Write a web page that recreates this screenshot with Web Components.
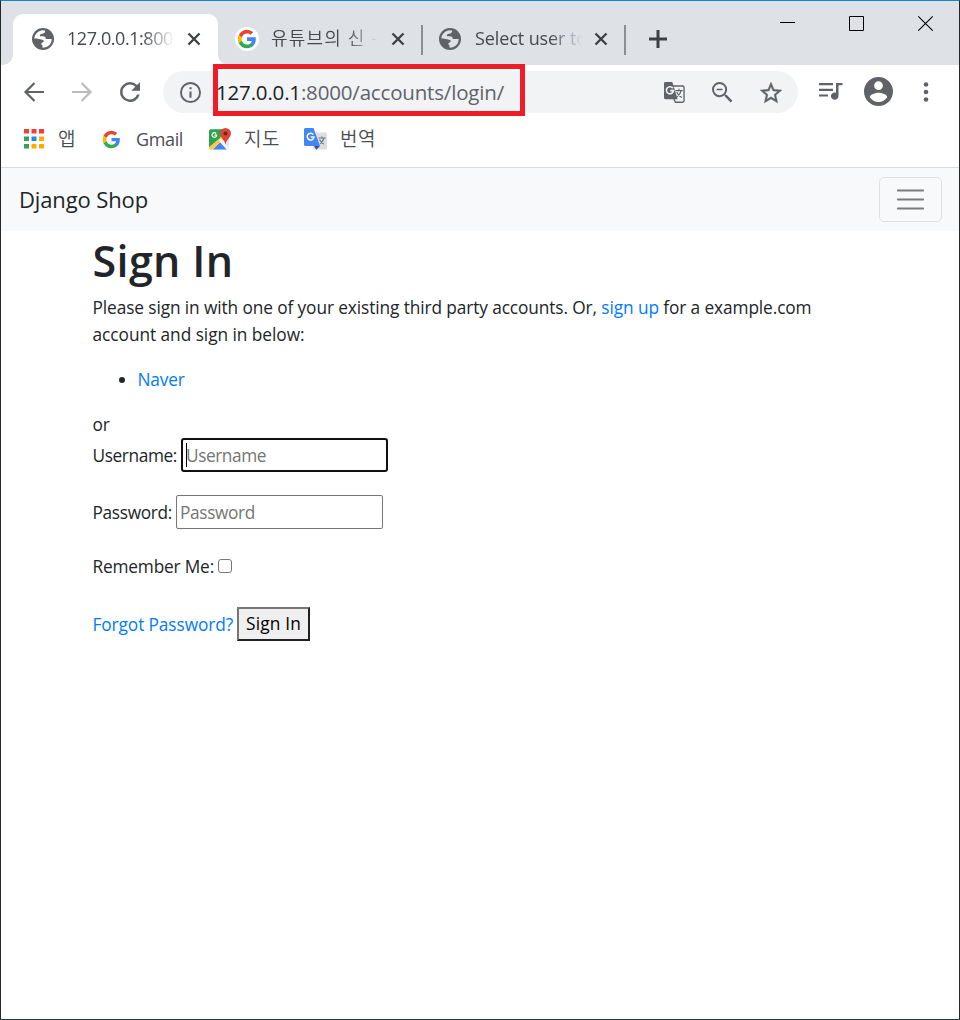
<!DOCTYPE html>
<html lang="ko">
<head>
<meta charset="utf-8">
<title>Django Shop</title>
<style>
html,body{margin:0;height:100%;background:#fff;overflow:hidden}
body{font-family:"Open Sans","Noto Sans CJK KR",sans-serif;color:#212529}
</style>
</head>
<body>
<browser-window></browser-window>
<script>
const define = (name, html, setup) => {
  const t = document.createElement('template');
  t.innerHTML = html;
  customElements.define(name, class extends HTMLElement {
    connectedCallback() {
      if (this.shadowRoot) return;
      this.attachShadow({ mode: 'open' }).appendChild(t.content.cloneNode(true));
      if (setup) setup(this, this.shadowRoot);
    }
  });
};

/* text run tracked to a given advance width */
define('fit-text', `<style>:host{display:inline-block;white-space:pre}</style><slot></slot>`, el => {
  const w = +el.getAttribute('w'), n = el.textContent.length;
  el.style.letterSpacing = ((w - el.getBoundingClientRect().width) / n) + 'px';
});

const GOOGLE = `<path fill="#4285f4" d="M45.1 24.5c0-1.6-.1-3.100-.4-4.500H24v8.500h11.800c-.5 2.800-2.100 5.100-4.400 6.700v5.500h7.100c4.200-3.800 6.600-9.500 6.600-16.200z"/><path fill="#34a853" d="M24 46c5.900 0 10.900-2 14.600-5.300l-7.100-5.500c-2 1.300-4.500 2.100-7.500 2.100-5.700 0-10.600-3.900-12.300-9.100H4.300v5.700C8 41.100 15.400 46 24 46z"/><path fill="#fbbc05" d="M11.700 28.200a13.200 13.200 0 0 1 0-8.400v-5.700H4.300a22 22 0 0 0 0 19.800z"/><path fill="#ea4335" d="M24 10.700c3.200 0 6.100 1.100 8.400 3.300l6.300-6.300A22 22 0 0 0 4.300 14.100l7.400 5.700c1.700-5.200 6.600-9.100 12.300-9.100z"/>`;
const ICONS = {
  globe: ['0 0 24 24', `<circle cx="12" cy="12" r="12" fill="#5f6368"/><path fill="var(--hole,#fff)" d="M2.500 11.500C3 6.500 7 2.800 12 2.500l2.500.4C14.300 5 12.800 6 11 6.300 9.300 6.500 8.300 7.500 8.600 9H12c2.300 0 3 1.200 3 3h6.500c0 5.300-4 9.500-10 9.500V19c-1.800-.8-1.800-2.700 0-3.200 2-.6 1.800-2.400-.5-2.900-3-.7-5.300-1.500-8.500-1.400z"/>`],
  google: ['0 0 48 48', GOOGLE],
  close: ['0 0 14 14', `<path d="M1.500 1.500l11 11m0-11l-11 11" fill="none" stroke="#3c4043" stroke-width="2.300"/>`],
  plus: ['0 0 18 18', `<path d="M9 0v18M0 9h18" stroke="#3c4043" stroke-width="3"/>`],
  back: ['0 0 20 20', `<path d="M20 10H1.500M10.500 1L1.500 10l9 9" fill="none" stroke="#5f6368" stroke-width="2.200"/>`],
  forward: ['0 0 20 20', `<path d="M0 10h18.500M9.500 1l9 9-9 9" fill="none" stroke="#babcbe" stroke-width="2.200"/>`],
  reload: ['4 4 16 16', `<path fill="#5f6368" d="M17.650 6.350A7.958 7.958 0 0 0 12 4a8 8 0 1 0 7.730 10h-2.080A6 6 0 1 1 12 6c1.660 0 3.140.69 4.220 1.780L13 11h7V4z"/>`],
  info: ['2 2 20 20', `<path fill="#5f6368" d="M11 17h2v-6h-2v6zm1-15a10 10 0 1 0 0 20 10 10 0 0 0 0-20zm0 18.200a8.200 8.200 0 1 1 0-16.400 8.200 8.200 0 0 1 0 16.400zM11 9h2V7h-2v2z"/>`],
  translate: ['0 0 22 22', `<path fill="none" stroke="#5f6368" stroke-width="1.400" d="M9 4.200h10.500a1.500 1.500 0 0 1 1.500 1.500v14a1.500 1.500 0 0 1-1.500 1.500H12l-2-4"/><path fill="#5f6368" d="M1.500 0h7.200L14.300 18H1.500A1.500 1.500 0 0 1 0 16.500v-15A1.500 1.500 0 0 1 1.500 0z"/><path d="M9.300 6.600A3.700 3.700 0 1 0 9.900 9H6.400" fill="none" stroke="#f1f3f4" stroke-width="1.700"/><path d="M12 9h7.500M15.700 7v2M18 9c-.6 3-2.500 5-4.700 6.700M13.300 10.500c1 2.500 3.200 4.600 5.500 5.700" fill="none" stroke="#5f6368" stroke-width="1.200"/>`],
  zoomout: ['3 3 18 18', `<path fill="#5f6368" d="M15.500 14h-.79l-.28-.27A6.471 6.471 0 0 0 16 9.500 6.500 6.500 0 1 0 9.500 16c1.610 0 3.090-.59 4.230-1.570l.27.28v.79l5 4.990L20.490 19l-4.990-5zm-6 .3a4.800 4.800 0 1 1 0-9.600 4.800 4.800 0 0 1 0 9.600zM7 8.800h5v1.300H7z"/>`],
  star: ['2 2 20 19', `<path fill="#5f6368" d="M22 9.240l-7.190-.62L12 2 9.190 8.630 2 9.240l5.460 4.730L5.820 21 12 17.270 18.180 21l-1.630-7.030L22 9.240zM12 15.400l-3.760 2.270 1-4.280-3.320-2.880 4.380-.38L12 6.100l1.710 4.040 4.380.38-3.320 2.880 1 4.280L12 15.400z" stroke="#5f6368" stroke-width=".3"/>`],
  music: ['0 0 24 20', `<path d="M0 2.200h14M0 8.200h14M0 14.200h9" stroke="#5f6368" stroke-width="2.300"/><path fill="#5f6368" d="M17 1h6.500v2.500h-4v11.300a3.800 3.800 0 1 1-2.500-3.500z"/>`],
  person: ['2 2 20 20', `<path fill="#5f6368" d="M12 2a10 10 0 1 0 0 20 10 10 0 0 0 0-20zm0 3a3 3 0 1 1 0 6 3 3 0 0 1 0-6zm0 14.200a7.200 7.200 0 0 1-6-3.220c.03-1.990 4-3.080 6-3.080 1.990 0 5.970 1.090 6 3.080a7.200 7.200 0 0 1-6 3.220z"/>`],
  dots: ['0 0 6 20', `<g fill="#5f6368"><circle cx="3" cy="2.500" r="2.300"/><circle cx="3" cy="10" r="2.300"/><circle cx="3" cy="17.500" r="2.300"/></g>`],
  apps: ['0 0 20 20', `<path fill="#ef4036" d="M0 0h5v4.500H0zM7.500 0h5v4.500h-5zM15 0h5v4.500h-5z"/><path fill="#34a05a" d="M0 7.500h5V12H0zM0 15h5v4.500H0z"/><path fill="#1e88e5" d="M7.500 7.500h5V12h-5z"/><path fill="#f9ab00" d="M15 7.500h5V12h-5zM7.500 15h5v4.500h-5zM15 15h5v4.500h-5z"/>`],
  maps: ['0 0 22 22', `<rect y="1.500" width="20" height="20" rx="1.500" fill="#e6e6e6"/><path fill="#2da24f" d="M1.500 1.500H17L1 18V3z"/><path fill="#4285f4" d="M3.500 21.500L11 14l7 7.500z"/><path fill="#f7cb4d" d="M0 18.500L14.500 4l3 4L4 21.500H1.500A1.500 1.500 0 0 1 0 20z"/><path fill="#fafafa" d="M10 12.500l2-2 8 9-1.500 2h-1z"/><path fill="#2da24f" d="M0 3a1.500 1.500 0 0 1 1.500-1.500H15L11 10 0 19z"/><path d="M7.200 5.500A2.300 2.300 0 1 0 7.700 7.200H5.500" fill="none" stroke="#fff" stroke-width="1.200"/><path fill="#db4437" d="M16.500 0a5.400 5.400 0 0 1 5.400 5.500c0 4.500-4.600 5.500-5.400 11.500-.8-6-5.400-7-5.400-11.500A5.400 5.400 0 0 1 16.500 0z"/><circle cx="16.500" cy="5.500" r="2" fill="#7d2219"/>`],
  gtranslate: ['0 0 23 22', `<rect x="9" y="4.500" width="14" height="17" rx="1.500" fill="#dedede"/><path fill="#3949ab" d="M10 18h6l-3.700 3.800z"/><path fill="#4285f4" d="M1.500 0h8L16 18H1.500A1.500 1.500 0 0 1 0 16.500v-15A1.500 1.500 0 0 1 1.500 0z"/><path d="M9.300 6.500A3.400 3.400 0 1 0 10 9H6.700" fill="none" stroke="#fff" stroke-width="1.500"/><path d="M14.500 10h7M18 8.500V10M20 10c-.7 3-2.500 4.600-4 5.700M15.500 11.500c1 2 3 4 4.500 4.700" fill="none" stroke="#607d8b" stroke-width="1.200"/>`],
  min: ['0 0 15 15', `<path d="M0 6.500h15" stroke="#000"/>`],
  max: ['0 0 15 15', `<path d="M.5.500h14v14H.5z" fill="none" stroke="#000"/>`],
  quit: ['0 0 15 15', `<path d="M.3.300l14.400 14.400m0-14.400L.3 14.700" stroke="#000" stroke-width="1.100"/>`],
  menu: ['0 0 27 27', `<path d="M.9 4.500h25.200M.9 13.500h25.200M.9 22.500h25.200" stroke="rgba(0,0,0,.5)" stroke-width="2.100" stroke-linecap="round"/>`]
};
define('ui-icon', `<style>:host{display:block;flex:none}svg{display:block;width:100%;height:100%;overflow:visible}</style>`, (el, root) => {
  const [box, body] = ICONS[el.getAttribute('name')];
  root.innerHTML += `<svg viewBox="${box}" preserveAspectRatio="none">${body}</svg>`;
  el.style.width = el.getAttribute('w') + 'px';
  el.style.height = (el.getAttribute('h') || el.getAttribute('w')) + 'px';
});

define('browser-tab', `<style>
:host{display:flex;align-items:center;box-sizing:border-box;height:51px;width:var(--tab-w,204px);padding:0 0 2px 18px;font-size:18px;color:#45494d;--hole:#dee1e6}
:host([active]){--hole:#fff;background:#fff;border-radius:10px 10px 0 0;position:relative}
:host([active])::before,:host([active])::after{content:"";position:absolute;bottom:0;width:10px;height:10px}
:host([active])::before{left:-10px;background:radial-gradient(circle at 0 0,transparent 9.500px,#fff 10px)}
:host([active])::after{right:-10px;background:radial-gradient(circle at 100% 0,transparent 9.500px,#fff 10px)}
.fav{width:24px;height:24px;border-radius:50%;display:grid;place-items:center}
.label{width:108px;margin:0 12px 0 12px;height:27px;line-height:27px;white-space:pre;overflow:hidden;-webkit-mask-image:linear-gradient(90deg,#000 70%,transparent 100%)}
:host([disc]) .fav{background:#fff}
</style><div class="fav"><slot name="icon"></slot></div><div class="label"><slot></slot></div><ui-icon name="close" w="14"></ui-icon>`);

define('tab-strip', `<style>
:host{display:flex;height:64px;background:#dee1e6;padding-left:12px;box-sizing:border-box;justify-content:space-between}
.tabs{display:flex;align-items:center;padding-top:13px;height:51px}
.sep{width:2px;height:30px;background:#8b8e92}
.plus{margin:0 0 2px 23px}
.win{display:flex;padding:15px 26px 0 0;gap:54px}
</style><div class="tabs">
<browser-tab active style="--tab-w:205px"><ui-icon slot="icon" name="globe" w="22"></ui-icon><fit-text w="122">127.0.0.1:8000/</fit-text></browser-tab>
<browser-tab disc style="--tab-w:203px;padding-left:17px"><ui-icon slot="icon" name="google" w="20"></ui-icon><fit-text w="113" style="font-weight:350">유튜브의 신 - </fit-text></browser-tab><div class="sep"></div>
<browser-tab style="--tab-w:201px;padding-left:15px"><ui-icon slot="icon" name="globe" w="22"></ui-icon><fit-text w="112" style="margin-left:1px">Select user to</fit-text></browser-tab><div class="sep"></div>
<ui-icon class="plus" name="plus" w="18"></ui-icon></div>
<div class="win"><ui-icon name="min" w="15"></ui-icon><ui-icon name="max" w="15"></ui-icon><ui-icon name="quit" w="15"></ui-icon></div>`);

define('tool-bar', `<style>
:host{display:flex;align-items:center;height:42px;padding:6px 26px 5px 23px}
.nav{display:flex;align-items:center;gap:28px;width:139px;padding-bottom:1px}
.omni{display:flex;align-items:center;box-sizing:border-box;position:relative;width:635px;height:42px;border-radius:21px;background:#f1f3f4;padding:0 16px 0 17px}
.url{margin-left:15px;font-size:20.500px;line-height:30px;color:#5f6368;flex:1}
.url b{font-weight:400;color:#202124}
.acts{display:flex;gap:27px;align-items:center}
.mark{position:absolute;left:50px;top:-7px;width:312px;height:52px;box-sizing:border-box;border:5px solid #ee1c25}
.right{display:flex;align-items:center;margin-left:21px;padding-bottom:1px}
</style>
<div class="nav"><ui-icon name="back" w="20"></ui-icon><ui-icon name="forward" w="20"></ui-icon><ui-icon name="reload" w="20"></ui-icon></div>
<div class="omni"><ui-icon name="info" w="21"></ui-icon><div class="url"><fit-text w="288"><b>127.0.0.1</b>:8000/accounts/login/</fit-text></div>
<div class="acts"><ui-icon name="translate" w="21"></ui-icon><ui-icon name="zoomout" w="21"></ui-icon><ui-icon name="star" w="22" h="21"></ui-icon></div><div class="mark"></div></div>
<div class="right"><ui-icon name="music" w="24" h="19"></ui-icon><ui-icon name="person" w="29" style="margin:0 30px 0 21px"></ui-icon><ui-icon name="dots" w="6" h="20"></ui-icon></div>`);

define('bookmark-bar', `<style>
:host{display:flex;align-items:center;height:42px;padding:0 23px 7px;border-bottom:1px solid #dadce0;font-size:18px;color:#4a4d51}
div{display:flex;align-items:center}
.k{font-weight:350;font-size:19px;position:relative;top:-1px}
</style>
<div style="gap:14px;width:78px"><ui-icon name="apps" w="20"></ui-icon><fit-text class="k" w="19">앱</fit-text></div>
<div style="gap:15px;width:107px"><ui-icon name="google" w="19"></ui-icon><fit-text w="47">Gmail</fit-text></div>
<div style="gap:13px;width:95px"><ui-icon name="maps" w="22"></ui-icon><fit-text class="k" w="36">지도</fit-text></div>
<div style="gap:13px"><ui-icon name="gtranslate" w="23" h="22"></ui-icon><fit-text class="k" w="36">번역</fit-text></div>`);

define('nav-bar', `<style>
:host{display:flex;justify-content:space-between;align-items:center;height:63px;background:#f8f9fa;padding:0 17px 0 18px;font-size:22px;color:#212529}
fit-text{margin-bottom:2px}
button{all:unset;box-sizing:border-box;width:63px;height:45px;border:1px solid rgba(0,0,0,.1);border-radius:5px;display:grid;place-items:center}
</style><fit-text w="129">Django Shop</fit-text><button aria-label="Toggle navigation"><ui-icon name="menu" w="27"></ui-icon></button>`);

define('form-row', `<style>:host{display:flex;align-items:center;gap:4px;height:34px;margin-bottom:23px}</style><slot></slot>`);

define('text-field', `<style>
:host{display:flex;align-items:center;position:relative;box-sizing:border-box;width:207px;height:34px;border:1px solid #767676;border-radius:2px;padding-left:3px;color:#757575}
:host([focused]){border:2px solid #101010;border-radius:3px;padding-left:3px}
:host([focused])::before{content:"";position:absolute;left:3px;top:3px;height:24px;width:1px;background:#000}
</style><slot></slot>`);

define('sign-in', `<style>
:host{display:block;padding-left:91.500px;font-size:17.300px;line-height:27px}
h1{margin:0 0 9px;font-size:43px;line-height:54px;padding-top:3px;height:51px;font-weight:600}
h1 fit-text{margin-top:-1px}
p{margin:0 0 18px}p fit-text{display:block;width:max-content}
a{color:#007bff;text-decoration:none}
ul{margin:0 0 18px;padding-left:45px}
.check{box-sizing:border-box;width:14px;height:14px;border:1px solid #767676;border-radius:3px}
button{font:inherit;color:#000;box-sizing:border-box;width:73px;height:34px;padding:0 0 1px;border:2px solid;border-color:#767676 #212121 #212121 #767676;background:#efefef;border-radius:0}
</style>
<h1><fit-text w="141">Sign In</fit-text></h1>
<p><fit-text w="719">Please sign in with one of your existing third party accounts. Or, <a>sign up</a> for a example.com</fit-text><fit-text w="212">account and sign in below:</fit-text></p>
<ul><li><a><fit-text w="47">Naver</fit-text></a></li></ul>
<div><fit-text w="17">or</fit-text></div>
<form-row><fit-text w="84.5">Username:</fit-text><text-field focused><fit-text w="80">Username</fit-text></text-field></form-row>
<form-row><fit-text w="79.5">Password:</fit-text><text-field><fit-text w="75">Password</fit-text></text-field></form-row>
<form-row style="margin:-3px 0 24px"><fit-text w="121.5">Remember Me:</fit-text><div class="check"></div></form-row>
<form-row><a><fit-text w="140.5">Forgot Password?</fit-text></a><button><fit-text w="55">Sign In</fit-text></button></form-row>`);

define('browser-window', `<style>
:host{display:flex;flex-direction:column;box-sizing:border-box;height:1020px;width:960px;background:#fff;border:1px solid #24272b;border-top-color:#1883d7;border-bottom-color:#1f3d58}
</style><tab-strip></tab-strip><tool-bar></tool-bar><bookmark-bar></bookmark-bar><nav-bar></nav-bar><sign-in></sign-in>`);
</script>
</body>
</html>
